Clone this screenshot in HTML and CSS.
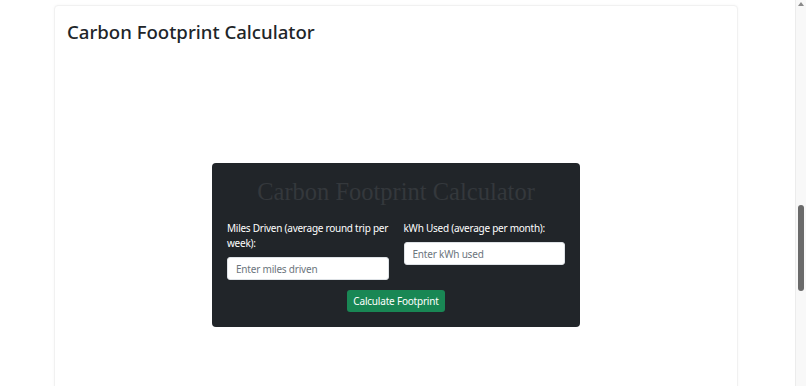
FILE: index.html
```html
<!DOCTYPE html>
<html>
<head>
<meta charset="utf-8">
<link rel="stylesheet" href="styles.css">
</head>
<body>
<div class="page">
  <div class="card">
    <h1 class="title">Carbon Footprint Calculator</h1>
    <div class="calc">
      <h2 class="calc-title">Carbon Footprint Calculator</h2>
      <div class="row">
        <div class="col">
          <label class="label">Miles Driven (average round trip per week):</label>
          <input class="input" type="text" placeholder="Enter miles driven">
        </div>
        <div class="col">
          <label class="label">kWh Used (average per month):</label>
          <input class="input" type="text" placeholder="Enter kWh used">
        </div>
      </div>
      <div class="actions">
        <button class="btn">Calculate Footprint</button>
      </div>
    </div>
  </div>
</div>
<div class="scrollbar">
  <div class="arrow"></div>
  <div class="thumb"></div>
</div>
</body>
</html>
```
FILE: styles.css
```css
html, body {
  margin: 0;
  padding: 0;
  background: #fff;
  overflow: hidden;
  height: 100%;
}
body {
  font-family: "Noto Sans", "Open Sans", sans-serif;
  color: #212529;
}
.page {
  width: 795px;
  height: 386px;
  overflow: hidden;
}
.card {
  margin: 5px 0 0 54px;
  width: 684px;
  height: 420px;
  box-sizing: border-box;
  padding: 13px 12px;
  background: #fff;
  border: 1px solid #f1f1f1;
  border-radius: 4px;
  box-shadow: 0 0 3px rgba(0,0,0,0.04);
}
.title {
  margin: 0;
  font-size: 18.6px;
  font-weight: 500;
  line-height: 26px;
  color: #212529;
}
.calc {
  width: 368px;
  box-sizing: border-box;
  margin: 118px auto 0;
  background: #212529;
  border-radius: 4px;
  padding: 12px 15px 15px;
}
.calc-title {
  margin: 0 0 12px;
  text-align: center;
  font-family: "Liberation Serif", "Times New Roman", serif;
  font-weight: normal;
  font-size: 24.5px;
  line-height: 34px;
  color: #34383c;
}
.row {
  display: flex;
  gap: 15px;
  align-items: flex-start;
}
.col {
  flex: 1 1 0;
  min-width: 0;
  display: flex;
  flex-direction: column;
}
.label {
  color: #fff;
  font-size: 10px;
  letter-spacing: -0.25px;
  line-height: 15px;
  margin-bottom: 6px;
}
.input {
  width: 100%;
  min-width: 0;
  height: 23px;
  box-sizing: border-box;
  border: 1px solid #dee2e6;
  border-radius: 3px;
  padding: 0 8px;
  font-family: inherit;
  font-size: 10px;
  letter-spacing: -0.2px;
  background: #fff;
  color: #212529;
  outline: none;
}
.input::placeholder {
  color: #6c757d;
}
.actions {
  display: flex;
  justify-content: center;
  margin-top: 10px;
}
.btn {
  height: 22px;
  padding: 0 6.5px;
  border: none;
  border-radius: 3px;
  background: #198754;
  color: #fff;
  font-family: inherit;
  font-size: 10px;
  letter-spacing: -0.2px;
}
.scrollbar {
  position: fixed;
  top: 0;
  right: 0;
  width: 11px;
  height: 386px;
  background: #f8f8f8;
  border-left: 1px solid #ececec;
  box-sizing: border-box;
}
.arrow {
  position: absolute;
  top: 2px;
  left: 2px;
  width: 0;
  height: 0;
  border-left: 3px solid transparent;
  border-right: 3px solid transparent;
  border-bottom: 4px solid #8a8a8a;
}
.thumb {
  position: absolute;
  top: 205px;
  left: 2px;
  width: 6px;
  height: 86px;
  border-radius: 3px;
  background: #6a6a6a;
}
```
